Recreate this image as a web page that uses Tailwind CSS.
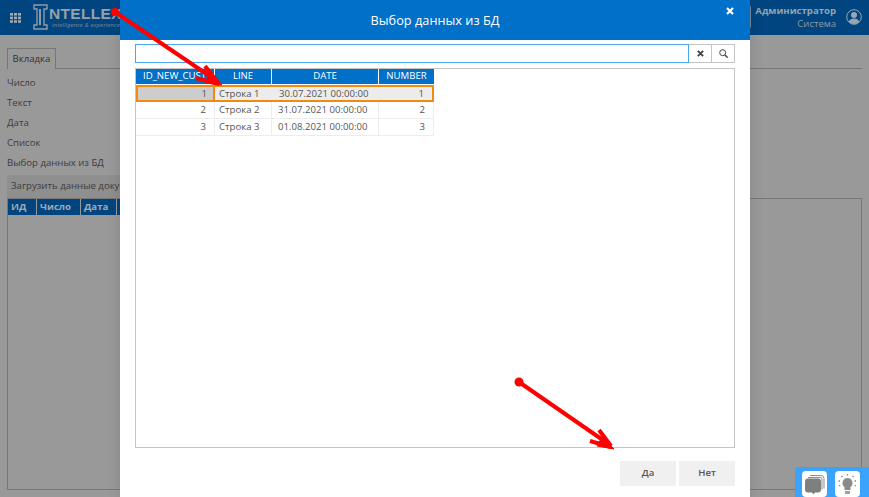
<!DOCTYPE html>
<html lang="en">
<head>
  <meta charset="UTF-8">
  <title>Выбор данных из БД</title>
  <script src="https://cdn.jsdelivr.net/npm/@tailwindcss/browser@4"></script>
</head>
<body class="relative w-[869px] h-[497px] overflow-hidden bg-[#999999] font-['Open_Sans',sans-serif] text-[9.6px]">

  <!-- page behind the dialog -->
  <header class="flex items-center h-[35px] bg-[#004580] text-[#9a9a9a]">
    <svg class="ml-[10px] w-[11px] h-[10px]" viewBox="0 0 11 10" fill="#9fa9b3">
      <rect x="0" y="0" width="3" height="2.6"/><rect x="4" y="0" width="3" height="2.6"/><rect x="8" y="0" width="3" height="2.6"/>
      <rect x="0" y="3.6" width="3" height="2.6"/><rect x="4" y="3.6" width="3" height="2.6"/><rect x="8" y="3.6" width="3" height="2.6"/>
      <rect x="0" y="7.2" width="3" height="2.6"/><rect x="4" y="7.2" width="3" height="2.6"/><rect x="8" y="7.2" width="3" height="2.6"/>
    </svg>
    <svg class="ml-[12px] w-[15px] h-[26px] mb-[2px]" viewBox="0 0 15 26" fill="none" stroke="#8d9aa8" stroke-width="1.4">
      <path d="M1 1h13v4h-3v16h3v4H1v-4h3V5H1z"/>
      <path d="M7 5v16" stroke-width="2"/>
    </svg>
    <div class="ml-[1px] flex flex-col w-[85px] overflow-hidden whitespace-nowrap">
      <span class="font-['Liberation_Sans',sans-serif] font-bold text-[15.5px] leading-[15px] tracking-[.3px] text-[#98a0a8]">NTELLEX</span>
      <span class="pl-[3px] mt-[1px] text-[6px] leading-[7px] tracking-[.1px] italic text-[#7d8c9c]">intelligence &amp; experience</span>
    </div>
    <div class="ml-auto mr-[4px] w-[10px] h-[24px] mb-[1px] border-r border-y border-[#7b8b9b] rounded-r-[3px]"></div>
    <div class="flex items-center mb-[2px]">
      <div class="flex flex-col items-end leading-[13px]">
        <span class="font-bold text-[9.6px] text-[#97a3ae]">Администратор</span>
        <span class="text-[9.5px] text-[#8c9aa8]">Система</span>
      </div>
      <svg class="ml-[10px] mr-[7px] w-[16px] h-[16px]" viewBox="0 0 16 16" fill="#9aa6b1">
        <circle cx="8" cy="8" r="7.3" fill="none" stroke="#9aa6b1"/>
        <circle cx="8" cy="6" r="3"/>
        <path d="M2.8 13c.8-2.4 2.8-3.4 5.2-3.4s4.4 1 5.2 3.4A7 7 0 0 1 8 15a7 7 0 0 1-5.2-2z"/>
      </svg>
    </div>
  </header>

  <main class="pl-[7px] pr-[7px] text-[#3d3d3d]">
    <div class="mt-[13px] h-[21px] border-b border-[#777777]">
      <span class="inline-block w-[49px] h-[21px] border border-b-0 border-[#777777] bg-[#999999] text-center leading-[20px] text-[#333333]">Вкладка</span>
    </div>
    <ul class="mt-[4px]">
      <li class="h-[20px] leading-[20px]">Число</li>
      <li class="h-[20px] leading-[20px]">Текст</li>
      <li class="h-[20px] leading-[20px]">Дата</li>
      <li class="h-[20px] leading-[20px]">Список</li>
      <li class="h-[20px] leading-[20px]">Выбор данных из БД</li>
    </ul>
    <div class="mt-[2px] w-[300px] h-[23px] bg-[#8f8f8f] pl-[4px] leading-[22px] whitespace-nowrap">Загрузить данные документа</div>
    <div class="h-[292px] border border-[#777777]">
      <div class="flex w-[300px] h-[16px] bg-[#004580] font-bold text-[#a3a9af] leading-[15px]">
        <span class="w-[29px] pl-[3px] border-r border-[#999999]">ИД</span>
        <span class="w-[44px] pl-[3px] border-r border-[#999999]">Число</span>
        <span class="w-[36px] pl-[3px] border-r border-[#999999]">Дата</span>
      </div>
    </div>
  </main>

  <!-- bottom right widget -->
  <div class="absolute right-0 bottom-0 flex gap-[8px] w-[74px] h-[30px] pt-[4px] pl-[7px] bg-[#3aa3fb] rounded-tl-[3px]">
    <div class="flex items-center justify-center w-[25px] h-[26px] bg-white rounded-[4px]">
      <svg class="w-[21px] h-[21px]" viewBox="0 0 21 21">
        <path d="M6 1.5h11a3 3 0 0 1 3 3v10" fill="none" stroke="#8e8e8e" stroke-width="1"/>
        <path d="M4 3.5h12a3 3 0 0 1 2 1v11" fill="none" stroke="#8e8e8e" stroke-width="1"/>
        <path d="M4 4.5h10a3 3 0 0 1 3 3v8a3 3 0 0 1-3 3H11l-1.5 2L8 18.500H4a3 3 0 0 1-3-3v-8a3 3 0 0 1 3-3z" fill="#7f7f7f"/>
      </svg>
    </div>
    <div class="flex items-center justify-center w-[25px] h-[26px] bg-white rounded-[4px]">
      <svg class="w-[21px] h-[22px]" viewBox="0 0 21 22">
        <path d="M10.500 5a5 5 0 0 1 3 9v3h-6v-3a5 5 0 0 1 3-9z" fill="#8a8a8a"/>
        <rect x="8" y="18" width="5" height="3" fill="#a0a0a0"/>
        <path d="M10.500 1v2M4.500 3l1.200 1.500M16.500 3l-1.200 1.500M1.500 8h2M17.500 8h2M2 13l1.700-1M19 13l-1.700-1" stroke="#8a8a8a" stroke-width="1.300" stroke-dasharray="1.500 .5"/>
      </svg>
    </div>
  </div>

  <!-- dialog -->
  <div class="absolute top-0 left-[120px] w-[630px] h-[497px] bg-white flex flex-col shadow-[0_0_14px_rgba(0,0,0,0.12)]">
    <div class="relative h-[40px] shrink-0 bg-[#0070c8] text-center text-white text-[12.75px] leading-[40px]">
      Выбор данных из БД
      <svg class="absolute top-[7px] right-[16px] w-[8px] h-[8px]" viewBox="0 0 8 8" stroke="white" stroke-width="2.200"><path d="M1 1l6 6M7 1l-6 6"/></svg>
    </div>

    <div class="flex mt-[4px] mx-[15px] h-[19px]">
      <div class="flex-1 border border-[#4ba6ee]"></div>
      <div class="flex items-center justify-center w-[23px] border border-l-0 border-[#c4c4c4]">
        <svg class="w-[7px] h-[7px]" viewBox="0 0 8 8" stroke="#444444" stroke-width="2.200"><path d="M1 1l6 6M7 1l-6 6"/></svg>
      </div>
      <div class="flex items-center justify-center w-[23px] border border-l-0 border-[#c4c4c4]">
        <svg class="w-[9px] h-[9px]" viewBox="0 0 9 9" fill="none" stroke="#444444" stroke-width="1"><circle cx="3.700" cy="3.700" r="3"/><path d="M6 6l2.600 2.600" stroke-width="1.500"/></svg>
      </div>
    </div>

    <div class="mt-[5px] mx-[15px] h-[380px] border border-[#c4c4c4] text-[#555555] text-[9.6px]">
      <div class="flex gap-px h-[15px] w-[298px] bg-white text-white text-center leading-[14px]">
        <span class="w-[78px] bg-[#0070c8] overflow-hidden whitespace-nowrap pl-[7px] text-left">ID_NEW_CUST</span>
        <span class="w-[56px] bg-[#0070c8]">LINE</span>
        <span class="w-[106px] bg-[#0070c8]">DATE</span>
        <span class="w-[55px] bg-[#0070c8]">NUMBER</span>
      </div>
      <div class="mt-px w-[298px]">
        <div class="flex h-[17px] leading-[13px] border-2 border-[#f08a12] bg-[#ececec]">
          <span class="w-[77px] pr-[6px] text-right bg-[#cdcdcd] border-r-2 border-[#f08a12]">1</span>
          <span class="w-[57px] pl-[4px]">Строка 1</span>
          <span class="w-[106px] pl-[7px]">30.07.2021 00:00:00</span>
          <span class="flex-1 pr-[8px] text-right">1</span>
        </div>
        <div class="flex h-[17px] leading-[16px] border-b border-r border-[#ececec]">
          <span class="w-[79px] pr-[8px] text-right border-r border-[#ececec]">2</span>
          <span class="w-[57px] pl-[4px] border-r border-[#ececec]">Строка 2</span>
          <span class="w-[107px] pl-[6px] border-r border-[#ececec]">31.07.2021 00:00:00</span>
          <span class="flex-1 pr-[8px] text-right">2</span>
        </div>
        <div class="flex h-[17px] leading-[16px] border-b border-r border-[#ececec]">
          <span class="w-[79px] pr-[8px] text-right border-r border-[#ececec]">3</span>
          <span class="w-[57px] pl-[4px] border-r border-[#ececec]">Строка 3</span>
          <span class="w-[107px] pl-[6px] border-r border-[#ececec]">01.08.2021 00:00:00</span>
          <span class="flex-1 pr-[8px] text-right">3</span>
        </div>
      </div>
    </div>

    <div class="flex justify-end gap-[3px] mt-[13px] mx-[15px]">
      <button class="w-[56px] h-[25px] bg-[#f0f0f0] font-semibold text-[#555555]">Да</button>
      <button class="w-[56px] h-[25px] bg-[#f0f0f0] font-semibold text-[#555555]">Нет</button>
    </div>
  </div>

  <!-- red arrows drawn on the screenshot -->
  <svg class="absolute inset-0 w-[869px] h-[497px] pointer-events-none" viewBox="0 0 869 497" fill="none" stroke="#ff0000" stroke-width="4">
    <circle cx="115" cy="12" r="4" fill="#ff0000" stroke="none"/>
    <path d="M115 12L217 81"/>
    <path d="M205 66L219 84"/>
    <path d="M196 78L219 84"/>
    <path d="M210 74L222 85L205 83z" fill="#ff0000" stroke-width="1"/>
    <circle cx="519" cy="382" r="4.500" fill="#ff0000" stroke="none"/>
    <path d="M519 382L610 445"/>
    <path d="M599 430L611 446"/>
    <path d="M590 441L611 447"/>
    <path d="M602 437L614 449L597 446z" fill="#ff0000" stroke-width="1"/>
  </svg>
</body>
</html>
